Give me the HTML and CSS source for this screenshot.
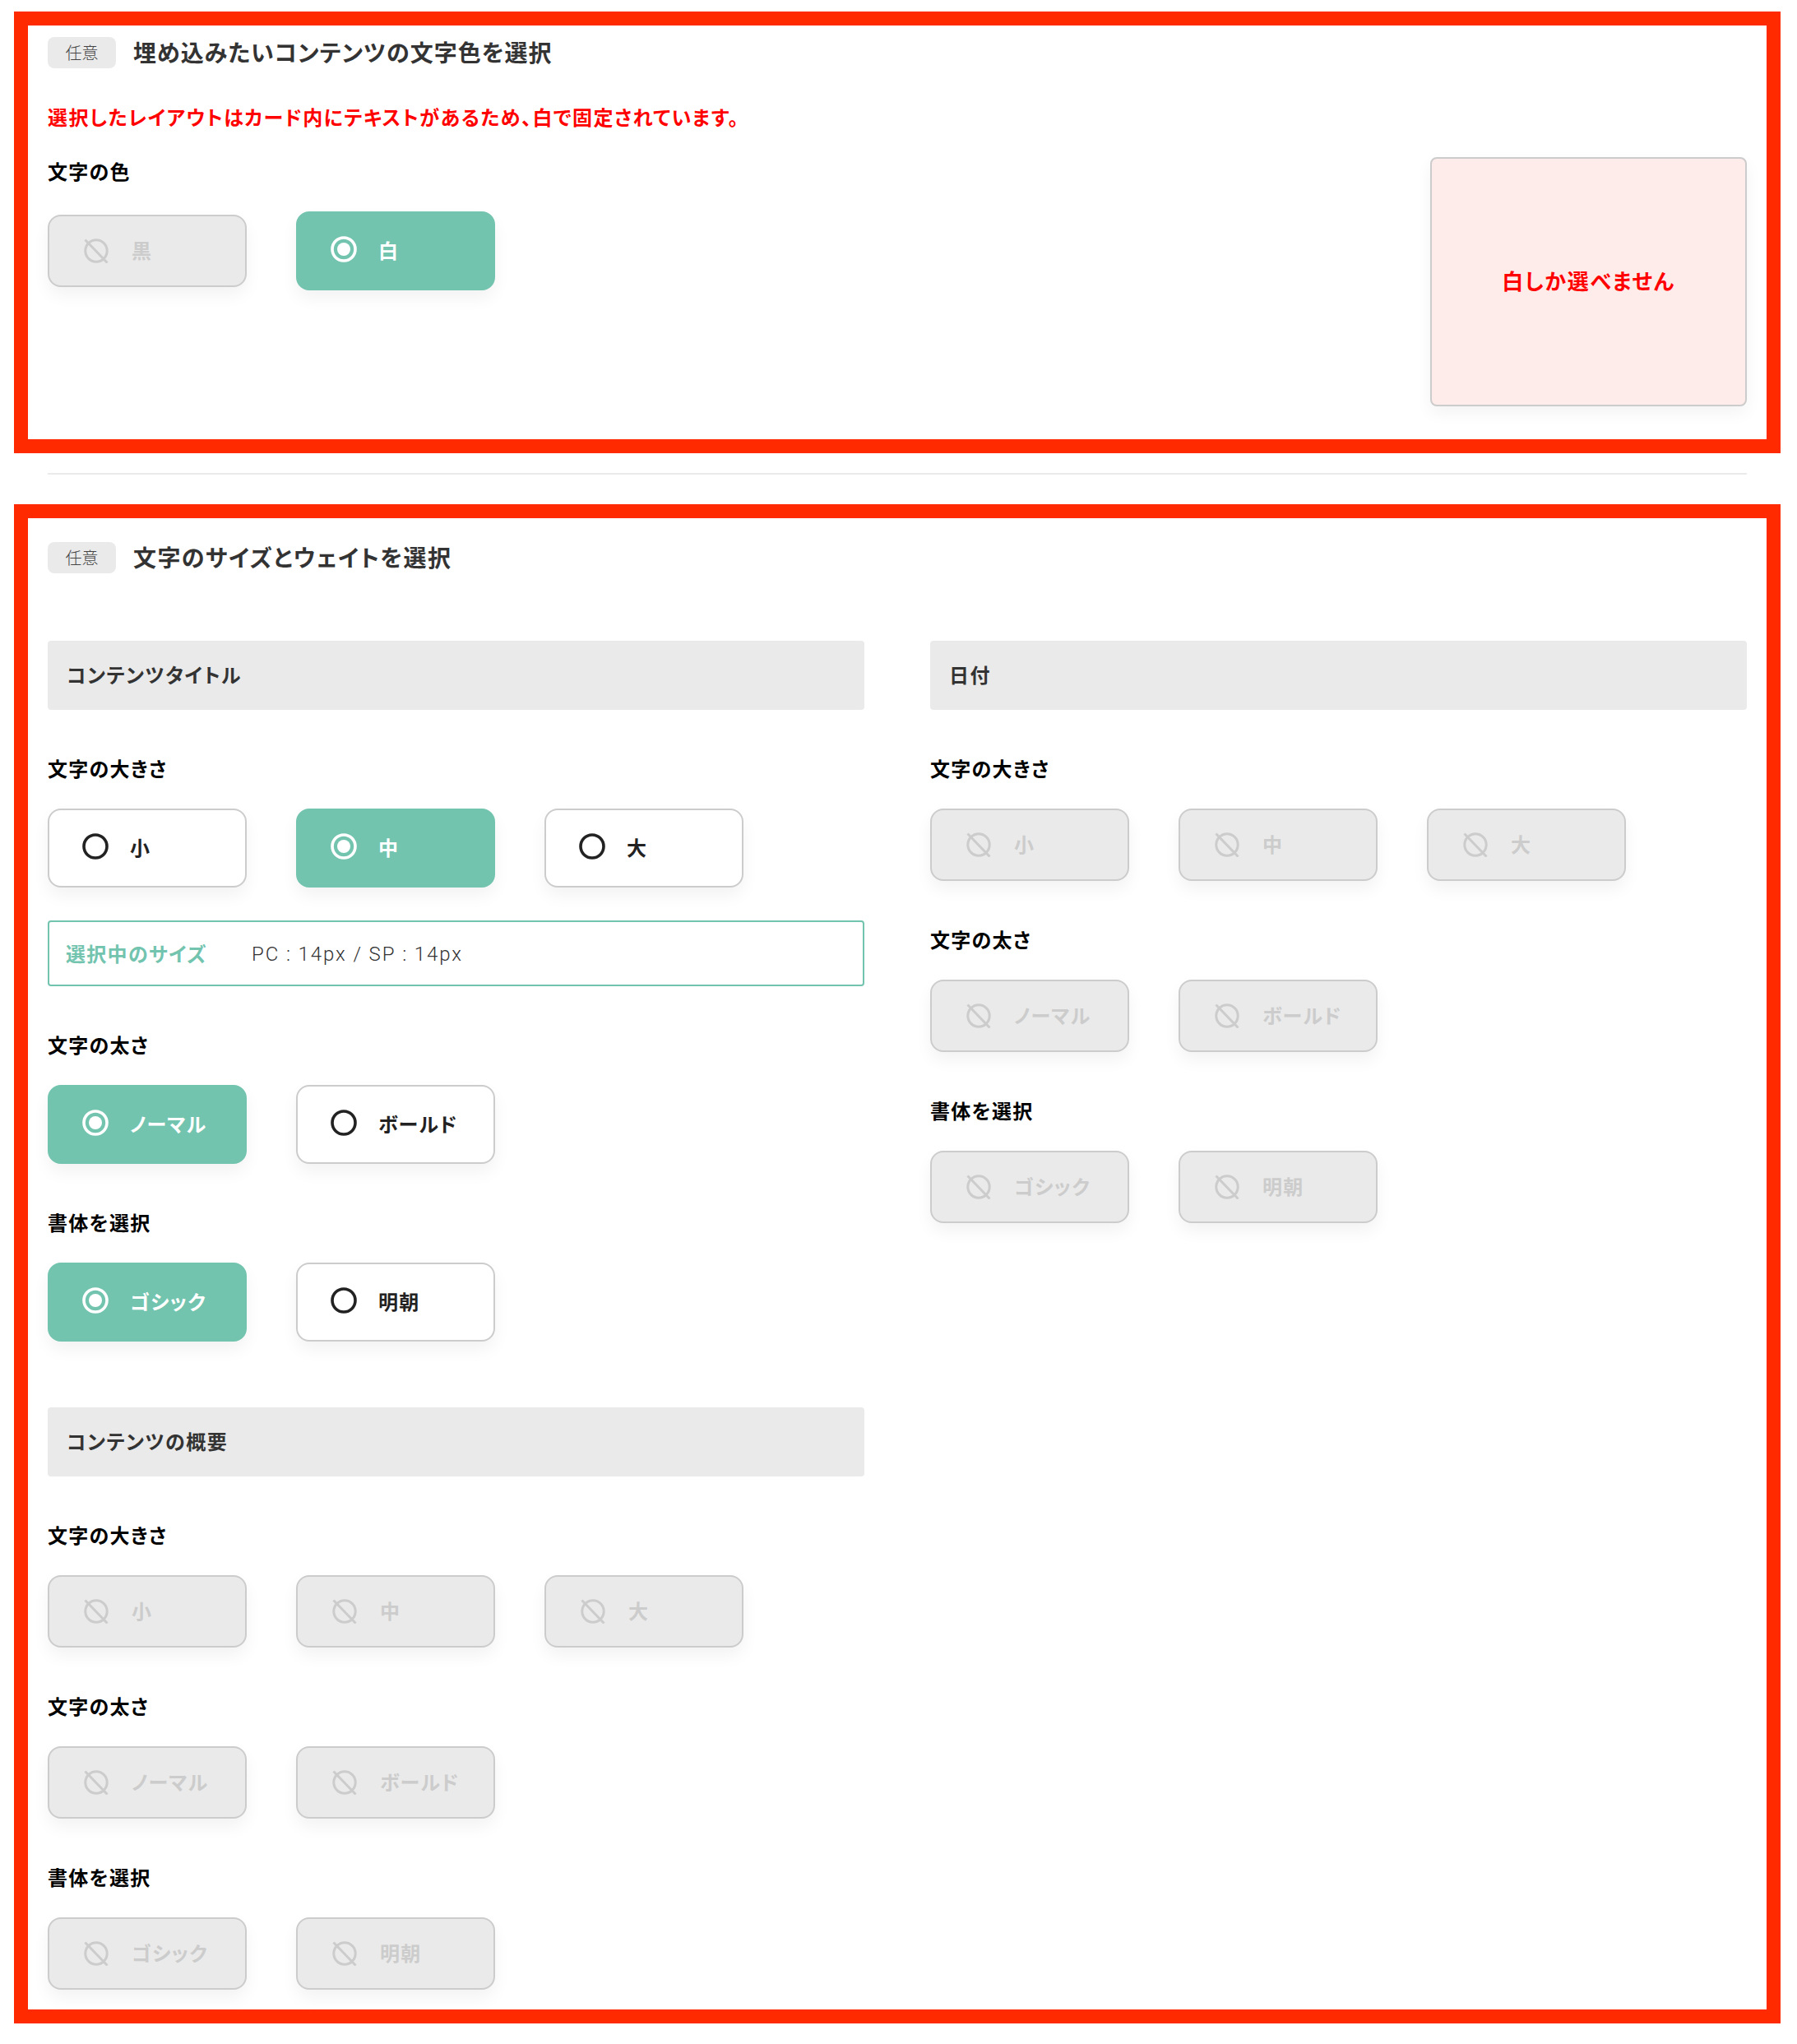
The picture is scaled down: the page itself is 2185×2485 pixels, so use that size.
FILE: index.html
```html
<!DOCTYPE html>
<html lang="ja">
<head>
<meta charset="utf-8">
<title>文字色とサイズの設定</title>
<link rel="stylesheet" href="styles.css">
</head>
<body>
<svg class="defs" aria-hidden="true">
  <symbol id="ban" viewBox="0 0 30 30"><circle cx="15" cy="15" r="13.2" fill="none" stroke="currentColor" stroke-width="3"/><line x1="1.5" y1="1.5" x2="28.5" y2="29.5" stroke="currentColor" stroke-width="3"/></symbol>
  <symbol id="off" viewBox="0 0 32 32"><circle cx="16" cy="16" r="14" fill="none" stroke="currentColor" stroke-width="3.6"/></symbol>
  <symbol id="on" viewBox="0 0 32 32"><circle cx="16" cy="16" r="14" fill="none" stroke="currentColor" stroke-width="3.6"/><circle cx="16" cy="16" r="8" fill="currentColor"/></symbol>
</svg>
<main class="page">
  <section class="frame frame-color">
    <header class="head"><span class="tag">任意</span><h2 class="title title-tight">埋め込みたいコンテンツの文字色を選択</h2></header>
    <p class="warn">選択したレイアウトはカード内にテキストがあるため、白で固定されています。</p>
    <div class="color-body">
      <div class="group">
        <h3 class="label">文字の色</h3>
        <div class="row row-center">
          <div class="btn disabled"><svg class="ico-ban"><use href="#ban"/></svg><span>黒</span></div>
          <div class="btn active"><svg class="ico"><use href="#on"/></svg><span>白</span></div>
        </div>
      </div>
      <div class="notice">白しか選べません</div>
    </div>
  </section>
  <hr class="divider">
  <section class="frame frame-size">
    <header class="head"><span class="tag">任意</span><h2 class="title">文字のサイズとウェイトを選択</h2></header>
    <div class="cols">
      <div class="col">
        <div class="bar">コンテンツタイトル</div>
        <div class="group gap">
          <h3 class="label">文字の大きさ</h3>
          <div class="row">
            <div class="btn"><svg class="ico"><use href="#off"/></svg><span>小</span></div>
            <div class="btn active"><svg class="ico"><use href="#on"/></svg><span>中</span></div>
            <div class="btn"><svg class="ico"><use href="#off"/></svg><span>大</span></div>
          </div>
          <div class="info"><span class="info-key">選択中のサイズ</span><span class="info-val">PC : 14px / SP : 14px</span></div>
        </div>
        <div class="group gap">
          <h3 class="label">文字の太さ</h3>
          <div class="row">
            <div class="btn active"><svg class="ico"><use href="#on"/></svg><span>ノーマル</span></div>
            <div class="btn"><svg class="ico"><use href="#off"/></svg><span>ボールド</span></div>
          </div>
        </div>
        <div class="group gap">
          <h3 class="label">書体を選択</h3>
          <div class="row">
            <div class="btn active"><svg class="ico"><use href="#on"/></svg><span>ゴシック</span></div>
            <div class="btn"><svg class="ico"><use href="#off"/></svg><span>明朝</span></div>
          </div>
        </div>
        <div class="bar bar-next">コンテンツの概要</div>
        <div class="group gap">
          <h3 class="label">文字の大きさ</h3>
          <div class="row">
            <div class="btn disabled"><svg class="ico-ban"><use href="#ban"/></svg><span>小</span></div>
            <div class="btn disabled"><svg class="ico-ban"><use href="#ban"/></svg><span>中</span></div>
            <div class="btn disabled"><svg class="ico-ban"><use href="#ban"/></svg><span>大</span></div>
          </div>
        </div>
        <div class="group gap">
          <h3 class="label">文字の太さ</h3>
          <div class="row">
            <div class="btn disabled"><svg class="ico-ban"><use href="#ban"/></svg><span>ノーマル</span></div>
            <div class="btn disabled"><svg class="ico-ban"><use href="#ban"/></svg><span>ボールド</span></div>
          </div>
        </div>
        <div class="group gap">
          <h3 class="label">書体を選択</h3>
          <div class="row">
            <div class="btn disabled"><svg class="ico-ban"><use href="#ban"/></svg><span>ゴシック</span></div>
            <div class="btn disabled"><svg class="ico-ban"><use href="#ban"/></svg><span>明朝</span></div>
          </div>
        </div>
      </div>
      <div class="col">
        <div class="bar">日付</div>
        <div class="group gap">
          <h3 class="label">文字の大きさ</h3>
          <div class="row">
            <div class="btn disabled"><svg class="ico-ban"><use href="#ban"/></svg><span>小</span></div>
            <div class="btn disabled"><svg class="ico-ban"><use href="#ban"/></svg><span>中</span></div>
            <div class="btn disabled"><svg class="ico-ban"><use href="#ban"/></svg><span>大</span></div>
          </div>
        </div>
        <div class="group gap">
          <h3 class="label">文字の太さ</h3>
          <div class="row">
            <div class="btn disabled"><svg class="ico-ban"><use href="#ban"/></svg><span>ノーマル</span></div>
            <div class="btn disabled"><svg class="ico-ban"><use href="#ban"/></svg><span>ボールド</span></div>
          </div>
        </div>
        <div class="group gap">
          <h3 class="label">書体を選択</h3>
          <div class="row">
            <div class="btn disabled"><svg class="ico-ban"><use href="#ban"/></svg><span>ゴシック</span></div>
            <div class="btn disabled"><svg class="ico-ban"><use href="#ban"/></svg><span>明朝</span></div>
          </div>
        </div>
      </div>
    </div>
  </section>
</main>
</body>
</html>
```
FILE: styles.css
```css
* { box-sizing: border-box; }
html, body { margin: 0; padding: 0; background: #fff; }
body {
  font-family: "Noto Sans CJK JP", "Noto Sans", sans-serif;
  font-feature-settings: "palt";
  color: #333;
}
.defs { position: absolute; width: 0; height: 0; }
.page { width: 2165px; height: 2485px; padding: 14px 0 0 17px; }
.frame { border: 17px solid #ff2a00; padding-left: 24px; padding-right: 24px; }
.frame-color { height: 537px; padding-top: 14px; }
.frame-size { height: 1847px; padding-top: 29px; }
.divider { height: 2px; border: 0; background: #eaeaea; margin: 24px 41px 36px 41px; }

.head { display: flex; align-items: center; gap: 21px; height: 38px; }
.tag {
  width: 83px; height: 38px; border-radius: 8px; background: #eaeaea;
  display: flex; align-items: center; justify-content: center;
  font-size: 20px; font-weight: 300; color: #444; padding-bottom: 1px;
}
.title { margin: 0; font-size: 28px; line-height: 36px; padding-bottom: 2px; font-weight: 700; letter-spacing: 1.4px; color: #333; }
.title-tight { letter-spacing: 1px; }

.warn { margin: 42px 0 30px; font-size: 24px; line-height: 34px; padding-bottom: 2px; font-weight: 700; letter-spacing: 1.45px; color: #f00; }
.color-body { display: flex; justify-content: space-between; align-items: flex-start; }
.notice {
  width: 385px; height: 303px; background: #feecea;
  border: 2px solid #ccc; border-radius: 8px;
  box-shadow: 0 8px 20px rgba(0,0,0,.05);
  display: flex; align-items: center; justify-content: center;
  font-size: 26px; font-weight: 700; letter-spacing: 1.6px; color: #f00; padding-bottom: 5px;
}

.cols { display: grid; grid-template-columns: 993px 993px; column-gap: 80px; margin-top: 82px; }
.bar {
  height: 84px; background: #eaeaea; border-radius: 4px; padding: 0 0 4px 23px;
  display: flex; align-items: center;
  font-size: 24px; font-weight: 700; letter-spacing: 1.5px; color: #333;
}
.bar-next { margin-top: 80px; }
.gap { margin-top: 54px; }
.label { margin: 0 0 30px; font-size: 24px; line-height: 34px; padding-bottom: 2px; font-weight: 700; letter-spacing: 1.3px; color: #000; }
.row { display: flex; gap: 60px; }
.row-center { align-items: center; }

.btn {
  width: 242px; height: 96px; flex: none;
  display: flex; align-items: center;
  border: 2px solid #ccc; border-radius: 16px; background: #fff;
  padding-left: 40px;
  box-shadow: 0 10px 20px rgba(0,0,0,.05);
  font-size: 24px; font-weight: 700; letter-spacing: 1.3px; color: #222;
}
.btn span { line-height: 34px; padding-bottom: 2px; }
.ico { width: 32px; height: 32px; flex: none; margin: -4px 26px 0 0; color: #222; }
.ico-ban { width: 30px; height: 30px; flex: none; margin-right: 28px; color: #ccc; }
.btn.active { background: #73c4af; border-color: #73c4af; color: #fff; }
.btn.active .ico { color: #fff; }
.btn.disabled { height: 88px; background: #eaeaea; color: #ccc; padding-left: 42px; }

.info {
  margin-top: 40px; height: 80px; border: 2px solid #73c4af; border-radius: 4px;
  padding-left: 20px; display: flex; align-items: center;
}
.info-key { width: 226px; font-size: 24px; font-weight: 700; letter-spacing: 1.3px; color: #73c4af; padding-bottom: 2px; }
.info-val { font-family: Roboto, sans-serif; font-size: 24px; font-weight: 300; color: #333; letter-spacing: 1.9px; padding-top: 1px; }
```
